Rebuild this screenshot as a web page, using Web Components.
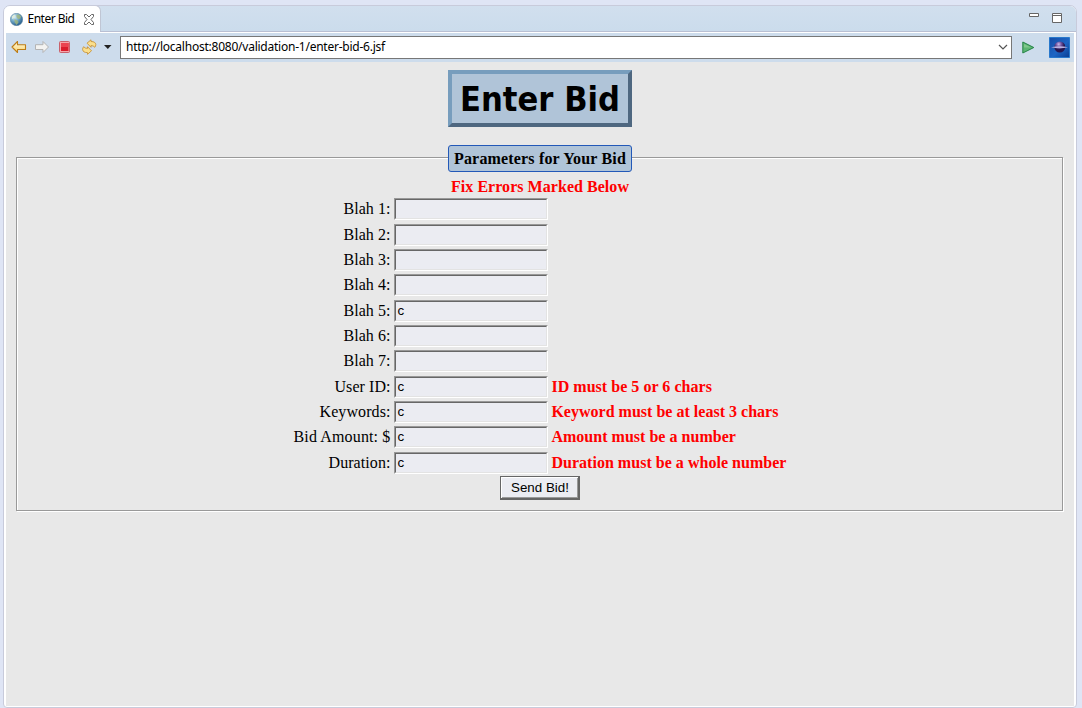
<!DOCTYPE html>
<html lang="en">
<head>
<meta charset="utf-8">
<title>Enter Bid</title>
<style>
html,body{margin:0;height:100%;overflow:hidden;background:#dfe5f5}
</style>
</head>
<body>
<browser-view>
  <view-tab slot="tabs">Enter Bid</view-tab>
  <browser-toolbar slot="toolbar" url="http://localhost:8080/validation-1/enter-bid-6.jsf"></browser-toolbar>
  <bid-page></bid-page>
</browser-view>
<script>
const define = (name, html, setup) => customElements.define(name, class extends HTMLElement {
  connectedCallback() {
    if (this.shadowRoot) return;
    const t = document.createElement('template');
    t.innerHTML = html;
    this.attachShadow({mode: 'open'}).append(t.content.cloneNode(true));
    if (setup) setup(this, this.shadowRoot);
  }
});

// Text run tracked out to a given width.
define('fit-text', `<style>:host{display:inline-block;white-space:pre}span{display:inline-block}</style><span><slot></slot></span>`, (el, root) => {
  const span = root.querySelector('span'), slot = root.querySelector('slot');
  const fit = () => {
    const n = slot.assignedNodes({flatten: true}).map(x => x.textContent).join('').length;
    if (!n) return;
    span.style.letterSpacing = '0';
    span.style.letterSpacing = (+el.getAttribute('w') - span.getBoundingClientRect().width) / n + 'px';
  };
  fit();
  slot.addEventListener('slotchange', fit);
});

define('view-tab', `<style>
:host{display:flex;align-items:center;box-sizing:border-box;width:98px;height:26px;padding:1px 0 0 7px;background:#fff;border-top:1px solid #c6c8d8;border-right:1px solid #c0c6d4;border-radius:5px 6px 0 0;font:12px "Noto Sans","Open Sans",sans-serif;color:#000}
svg{flex:none}.x{margin-left:8px}
</style>
<svg width="13" height="13" viewBox="0 0 13 13"><defs><radialGradient id="g" cx=".35" cy=".3" r=".8"><stop offset="0" stop-color="#d8edf5"/><stop offset=".45" stop-color="#6fa6c6"/><stop offset="1" stop-color="#164d80"/></radialGradient></defs><circle cx="6.5" cy="6.5" r="6.2" fill="url(#g)" stroke="#6389a4" stroke-width=".6"/><path d="M6.5 2l2-.8 2.500 2-.5 2-2 1-2-2zM4.500 6l3 1.500 1 2-2 2.500-2-3z" fill="#a3b67c" opacity=".8"/><path d="M2 3.500L4 1.500l1.500.8L4 5 2 6z" fill="#dcebdc"/></svg>
<fit-text w="47" style="margin:-1px 0 0 4.500px"><slot></slot></fit-text>
<svg class="x" width="12" height="11" viewBox="0 0 12 11"><path d="M1.500.5h2L6 3 8.500.5h2v2L8 5.500l2.500 3v2h-2L6 8l-2.500 2.500h-2v-2L4 5.500 1.500 2.500z" fill="#fff" stroke="#666" stroke-width="1"/></svg>`);

define('browser-toolbar', `<style>
:host{display:flex;align-items:center;height:29px;background:#cddcec;font:12px "Noto Sans","Open Sans",sans-serif;color:#000}
svg{display:block;flex:none}
.url{display:flex;align-items:center;justify-content:space-between;box-sizing:border-box;width:892px;height:23px;margin-left:7px;border:1px solid #777;background:#fff;padding:0 3px 0 5px}
.url fit-text{margin-top:-2px}
</style>
<svg width="107" height="29" viewBox="6 33 107 29">
<defs><linearGradient id="y" x2="0" y2="1"><stop stop-color="#fffbe0"/><stop offset="1" stop-color="#fad36c"/></linearGradient></defs>
<path d="M12 47l5.500-5.500v3.200h8v4.800h-8v3z" fill="url(#y)" stroke="#bd7d17" stroke-width="1.100" stroke-linejoin="round"/>
<path d="M48.500 47L43 41.500v3.200h-7.500v4.800H43v3z" fill="#f3f3f1" stroke="#b3b3b3" stroke-linejoin="round"/>
<rect x="59.500" y="41.500" width="10" height="11" rx="1" fill="#f4a7ab" stroke="#c8616b"/><rect x="61" y="43" width="7.500" height="8" fill="#d91c2c"/><path d="M61 43h7.500v4H61z" fill="#ea4450"/>
<g fill="#fbdf8c" stroke="#c8943a" stroke-width=".9" stroke-linejoin="round"><path id="a" d="M87 43.200L91 39.800V41.500Q95.500 41.500 95.800 44.500 95.800 46 94.800 47.300 93.500 45.600 91 45.600V47.300z"/><path d="M91.500 50.800L87.500 54.300V52.600Q83 52.600 82.600 49.600 82.600 48 83.600 46.700 85 48.400 87.500 48.400V46.700z"/></g>
<path d="M104 45h7.500l-3.700 4z" fill="#222"/></svg>
<div class="url"><fit-text w="259"></fit-text><svg width="10" height="7" viewBox="0 0 10 7"><path d="M1 1l4 4 4-4" fill="none" stroke="#555" stroke-width="1.200"/></svg></div>
<svg style="margin-left:10px" width="13" height="13" viewBox="0 0 13 13"><path d="M.8 1v11L11.800 6.500z" fill="#5cb573" stroke="#258447"/><path d="M2 3l7 3.500H2z" fill="#80c88c"/></svg>
<svg style="margin-left:14px" width="21" height="21" viewBox="0 0 21 21"><defs><linearGradient id="b" x2="1" y2="1"><stop stop-color="#154ba5"/><stop offset=".55" stop-color="#1d65c4"/><stop offset="1" stop-color="#0a3c91"/></linearGradient><radialGradient id="p" cx=".4" cy=".25"><stop stop-color="#cbbbe8"/><stop offset=".45" stop-color="#765aa7"/><stop offset="1" stop-color="#24164f"/></radialGradient></defs><path fill="url(#b)" stroke="#2878cc" d="M.5.5h20v20H.5z"/><circle cx="10.800" cy="10" r="5.500" fill="url(#p)"/><path d="M2 10.200q9-2 17 0-8 2-17 0z" fill="#b9b0e0"/></svg>`, (el, root) => {
  root.querySelector('fit-text').textContent = el.getAttribute('url');
});

define('browser-view', `<style>
:host{display:flex;flex-direction:column;box-sizing:border-box;width:1074px;height:703px;margin:5px 0 0 3px;border:1px solid #c8cbdb;border-radius:7px 7px 4px 4px;background:#fff;overflow:hidden}
header{display:flex;justify-content:space-between;box-sizing:border-box;height:25px;background:linear-gradient(#d1dfee,#cbdcec);flex:none}
header svg{margin:5px 13px 0 0}
slot[name=tabs]::slotted(*){margin:-1px 0 0 -1px}
.strip{height:1px;flex:none;background:linear-gradient(90deg,#fff 96px,#b9bfd3 96px)}
main{display:flex;flex-direction:column;flex:1;margin:1px 2px 1px 2px;background:#e8e8e8}
</style>
<header><slot name="tabs"></slot><svg width="34" height="13" viewBox="0 0 34 13"><path d="M.5 2.500h9v3h-9zM23.500 2.500h9v9h-9zM23.500 4.500h9" fill="#fff" stroke="#666"/></svg></header>
<div class="strip"></div>
<main><slot name="toolbar"></slot><slot></slot></main>`);

define('page-title', `<style>
:host{display:flex;align-items:center;justify-content:center;box-sizing:border-box;width:184px;height:57px;border:4px solid;border-color:#779dbd #4e6780 #4e6780 #779dbd;background:#b0c4d8;font:bold 33px "DejaVu Sans",sans-serif;color:#000}
span{white-space:nowrap;margin-top:2px;transform:scaleX(.93)}
</style><span><slot></slot></span>`);

define('bid-field', `<style>
:host{display:grid;grid-template-columns:373px 154px 1fr;column-gap:4px;height:25.330px;font:16px "Liberation Serif",serif;line-height:21px;color:#000}
.l{text-align:right;margin-right:-.5px}
.i{box-sizing:border-box;height:22px;border:1px solid;border-color:#989898 #fff #fff #989898}
.i div{box-sizing:border-box;height:20px;border:1px solid;border-color:#676767 #e3e3e3 #e3e3e3 #676767;background:#ebecf2;padding-left:1.500px;font:13.330px "Liberation Sans",sans-serif;line-height:18px}
.e{color:#f00;font-weight:bold;margin-left:-.6px}
</style><div class="l"></div><div class="i"><div></div></div><div class="e"></div>`, (el, root) => {
  const put = (sel, text, w) => {
    if (!text) return;
    const f = document.createElement('fit-text');
    f.setAttribute('w', w); f.textContent = text;
    root.querySelector(sel).append(f);
  };
  put('.l', el.getAttribute('label'), el.getAttribute('lw') || 47);
  put('.e', el.getAttribute('error'), el.getAttribute('ew'));
  root.querySelector('.i div').textContent = el.getAttribute('value') || '';
});

define('bid-button', `<style>
:host{display:block;width:80px;height:24px}
button{display:block;box-sizing:border-box;width:80px;height:24px;margin:0;padding:0 0 0 1px;border:1px solid #666;border-right-width:2px;border-bottom-width:2px;background:#ebecf2;box-shadow:inset 1px 1px #fff,inset -1px -1px #999;font:13.330px "Liberation Sans",sans-serif;color:#000}
</style><button type="button"><fit-text w="58"><slot></slot></fit-text></button>`);

define('param-group', `<style>
:host{display:flex;flex-direction:column;box-sizing:border-box;width:1047px;height:354px;border:1px solid #999;box-shadow:inset 1px 1px #fff,1px 1px #fff;align-items:center;font:bold 16px "Liberation Serif",serif;color:#000}
.legend{display:flex;align-items:center;justify-content:center;box-sizing:border-box;width:184px;height:27px;margin:-13px 0 0 1px;flex:none;border:1px solid #2359b8;border-radius:3px;background:#b0c4d8}
.msg{height:26.400px;line-height:30px;color:#f00;margin-left:1px}
.fields{align-self:stretch}
</style><div class="legend"><fit-text w="172">Parameters for Your Bid</fit-text></div>
<div class="msg"><fit-text w="178">Fix Errors Marked Below</fit-text></div>
<div class="fields"><slot></slot></div><slot name="action"></slot>`);

define('bid-page', `<style>
:host{display:flex;flex-direction:column;align-items:center;flex:1;padding:8px 11px 0 10px;background:#e8e8e8}
param-group{margin-top:30px;flex:none}
page-title{flex:none;margin-left:1px}
bid-button{margin:-1.400px 0 0 1px}
</style><page-title>Enter Bid</page-title>
<param-group>
<bid-field label="Blah 1:"></bid-field><bid-field label="Blah 2:"></bid-field><bid-field label="Blah 3:"></bid-field><bid-field label="Blah 4:"></bid-field><bid-field label="Blah 5:" value="c"></bid-field><bid-field label="Blah 6:"></bid-field><bid-field label="Blah 7:"></bid-field>
<bid-field label="User ID:" lw="56" value="c" error="ID must be 5 or 6 chars" ew="160.500"></bid-field>
<bid-field label="Keywords:" lw="71" value="c" error="Keyword must be at least 3 chars" ew="227"></bid-field>
<bid-field label="Bid Amount: $" lw="97" value="c" error="Amount must be a number" ew="184.500"></bid-field>
<bid-field label="Duration:" lw="62" value="c" error="Duration must be a whole number" ew="235"></bid-field>
<bid-button slot="action">Send Bid!</bid-button>
</param-group>`);
</script>
</body>
</html>
